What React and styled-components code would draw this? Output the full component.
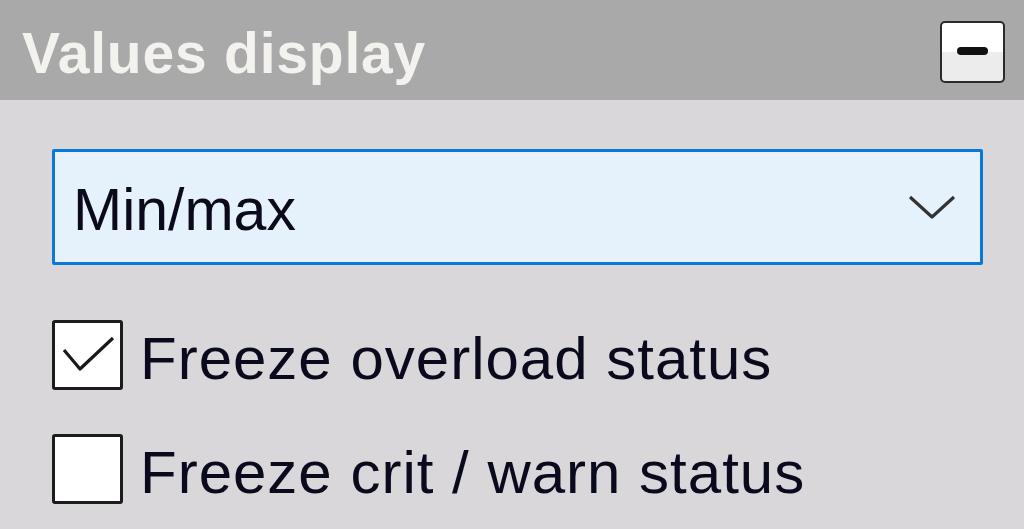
import React from "react"
import styled, { createGlobalStyle } from "styled-components"

const GlobalStyle = createGlobalStyle`
  html, body {
    margin: 0;
    padding: 0;
    background: #d9d7da;
  }
  body {
    font-family: "Liberation Sans", Arial, sans-serif;
  }
`

const Panel = styled.div`
  width: 1024px;
  height: 529px;
  background: #d9d7da;
  overflow: hidden;
`

const Header = styled.div`
  height: 100px;
  background: #a9a9a9;
  display: flex;
  align-items: center;
  justify-content: space-between;
  padding: 0 19px 0 22px;
  box-sizing: border-box;
`

const Title = styled.span`
  font-size: 57px;
  font-weight: bold;
  color: #f4f2ef;
  letter-spacing: 0.8px;
  line-height: 1;
  margin-top: 6px;
`

const CollapseButton = styled.button`
  width: 65px;
  height: 62px;
  margin-top: 4px;
  border: 2px solid #2a2a2a;
  border-radius: 5px;
  background: linear-gradient(#ffffff 0%, #ffffff 50%, #ececec 50%, #ececec 100%);
  display: flex;
  align-items: center;
  justify-content: center;
  padding: 0;
  box-sizing: border-box;
  &:after {
    content: "";
    width: 31px;
    height: 8px;
    border-radius: 4px;
    background: #111;
    margin-top: -2px;
  }
`

const Body = styled.div`
  padding: 49px 41px 0 52px;
  display: flex;
  flex-direction: column;
`

const Select = styled.div`
  height: 116px;
  border: 3px solid #0a78d7;
  border-radius: 2px;
  background: #e5f1fb;
  box-sizing: border-box;
  display: flex;
  align-items: center;
  justify-content: space-between;
  padding: 0 24px 0 18px;
  margin-bottom: 55px;
`

const SelectValue = styled.span`
  font-size: 59px;
  color: #0a0a1c;
  line-height: 1;
  margin-top: 6px;
`

const Chevron = () => (
  <svg width="48" height="28" viewBox="0 0 48 28">
    <path
      d="M2 4 L24 24 L46 4"
      fill="none"
      stroke="#333"
      strokeWidth="3.2"
      strokeLinejoin="round"
    />
  </svg>
)

const CheckRow = styled.label`
  display: flex;
  align-items: center;
  gap: 17px;
  height: 70px;
  margin-bottom: ${props => (props.last ? 0 : "44px")};
`

const Box = styled.span`
  width: 71px;
  height: 70px;
  border: 3px solid #1c1c1c;
  border-radius: 3px;
  background: #fff;
  box-sizing: border-box;
  display: flex;
  align-items: center;
  justify-content: center;
  flex-shrink: 0;
`

const CheckLabel = styled.span`
  font-size: 60px;
  color: #0a0a1c;
  line-height: 1;
  margin-top: 8px;
  letter-spacing: 1px;
`

const CheckMark = () => (
  <svg width="60" height="50" viewBox="0 0 60 50">
    <path
      d="M6 20 L22 39 L55 8"
      fill="none"
      stroke="#1a1a1a"
      strokeWidth="3.2"
      strokeLinejoin="round"
    />
  </svg>
)

const Checkbox = ({ checked, label, last }) => (
  <CheckRow last={last}>
    <Box>{checked ? <CheckMark /> : null}</Box>
    <CheckLabel>{label}</CheckLabel>
  </CheckRow>
)

export default function App() {
  return (
    <Panel>
      <GlobalStyle />
      <Header>
        <Title>Values display</Title>
        <CollapseButton aria-label="Collapse" />
      </Header>
      <Body>
        <Select>
          <SelectValue>Min/max</SelectValue>
          <Chevron />
        </Select>
        <Checkbox checked label="Freeze overload status" />
        <Checkbox label="Freeze crit / warn status" last />
      </Body>
    </Panel>
  )
}
